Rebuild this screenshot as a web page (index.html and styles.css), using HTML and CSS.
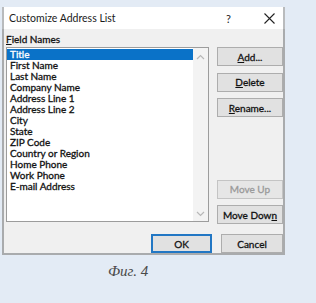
FILE: index.html
```html
<!DOCTYPE html>
<html>
  <head>
    <title>Customize Address List</title>
    <link rel="stylesheet" href="styles.css">
  </head>
  <body>
    <div class="dialog">
      <div class="titlebar">
        <span class="title">Customize Address List</span>
        <span class="help">?</span>
        <svg class="close" width="11" height="11" viewBox="0 0 11 11">
          <path d="M0.5 0.5 L10.5 10.5 M10.5 0.5 L0.5 10.5" stroke="#222" stroke-width="1.1" fill="none"/>
        </svg>
      </div>
      <div class="content">
        <div class="label"><u>F</u>ield Names</div>
        <div class="main">
          <div class="listbox">
            <ul class="items">
              <li class="selected">Title</li>
              <li>First Name</li>
              <li>Last Name</li>
              <li>Company Name</li>
              <li>Address Line 1</li>
              <li>Address Line 2</li>
              <li>City</li>
              <li>State</li>
              <li>ZIP Code</li>
              <li>Country or Region</li>
              <li>Home Phone</li>
              <li>Work Phone</li>
              <li>E-mail Address</li>
            </ul>
            <div class="scrollbar">
              <svg width="9" height="6" viewBox="0 0 9 6"><path d="M1 5 L4.5 1.5 L8 5" stroke="#b8b8b8" stroke-width="1.2" fill="none"/></svg>
              <svg width="9" height="6" viewBox="0 0 9 6"><path d="M1 1 L4.5 4.5 L8 1" stroke="#b8b8b8" stroke-width="1.2" fill="none"/></svg>
            </div>
          </div>
          <div class="side">
            <div class="group">
              <button class="btn"><u>A</u>dd...</button>
              <button class="btn"><u>D</u>elete</button>
              <button class="btn"><u>R</u>ename...</button>
            </div>
            <div class="group">
              <button class="btn disabled">Move Up</button>
              <button class="btn">Move Dow<u>n</u></button>
            </div>
          </div>
        </div>
        <div class="footer">
          <button class="btn ok">OK</button>
          <button class="btn cancel">Cancel</button>
        </div>
      </div>
    </div>
    <div class="caption">Фиг. 4</div>
  </body>
</html>
```

FILE: styles.css
```css
body {
  margin: 0;
  background: #e3ebf5;
  font-family: Lato, "Noto Sans", sans-serif;
  width: 316px;
  height: 303px;
  overflow: hidden;
}

.dialog {
  margin: 7px 0 0 2px;
  width: 283px;
  height: 248px;
  box-sizing: border-box;
  border: 2px solid #a9abad;
  border-top: none;
  background: #f0f0f0;
  display: flex;
  flex-direction: column;
}

.titlebar {
  height: 22px;
  width: 283px;
  margin-left: -2px;
  padding-left: 5px;
  box-sizing: border-box;
  background: #ffffff;
  border-left: 2px solid #b9bbbd;
  border-right: 2px solid #b9bbbd;
  display: flex;
  align-items: center;
}

.title {
  font-size: 10.5px;
  color: #1a1a1a;
  flex: 1;
}

.help {
  font-size: 11px;
  color: #222;
  margin-right: 33px;
}

.close {
  margin-right: 8px;
}

.content {
  flex: 1;
  padding-left: 2px;
  display: flex;
  flex-direction: column;
}

.label {
  font-size: 10px;
  color: #111;
  height: 18px;
  line-height: 12px;
  padding-top: 4px;
  box-sizing: border-box;
  -webkit-text-stroke: 0.3px #111;
}

.main {
  display: flex;
  gap: 8px;
}

.listbox {
  width: 203px;
  height: 175px;
  box-sizing: border-box;
  border: 1px solid #9c9c9c;
  background: #ffffff;
  display: flex;
}

.items {
  list-style: none;
  margin: 0;
  padding: 1px 0 0 0;
  flex: 1;
}

.items li {
  height: 11px;
  line-height: 11px;
  font-size: 10px;
  color: #111;
  padding-left: 3px;
  -webkit-text-stroke: 0.3px #111;
}

.items li.selected {
  background: #0a72c8;
  color: #ffffff;
  -webkit-text-stroke: 0.3px #ffffff;
}

.scrollbar {
  width: 15px;
  background: #f3f3f3;
  display: flex;
  flex-direction: column;
  justify-content: space-between;
  align-items: center;
  padding: 6px 0 4px;
}

.side {
  width: 66px;
  height: 177px;
  display: flex;
  flex-direction: column;
  justify-content: space-between;
}

.group {
  display: flex;
  flex-direction: column;
  gap: 6.5px;
}

.btn {
  height: 19px;
  padding: 0;
  background: #e1e1e1;
  border: 1px solid #adadad;
  font-family: Lato, "Noto Sans", sans-serif;
  font-size: 10px;
  color: #111;
  -webkit-text-stroke: 0.3px #111;
  box-sizing: border-box;
}

.btn.disabled {
  color: #9a9a9a;
  -webkit-text-stroke: 0.3px #9a9a9a;
  background: #e6e6e6;
  border-color: #c4c4c4;
}

.footer {
  display: flex;
  justify-content: flex-end;
  gap: 9px;
  margin-top: 10px;
}

.ok {
  width: 61px;
  border: 2px solid #2277c4;
}

.cancel {
  width: 62px;
}

.caption {
  padding: 8px 0 0 108px;
  font-family: "Liberation Serif", serif;
  font-style: italic;
  font-size: 15px;
  color: #4a4a4a;
}
```
